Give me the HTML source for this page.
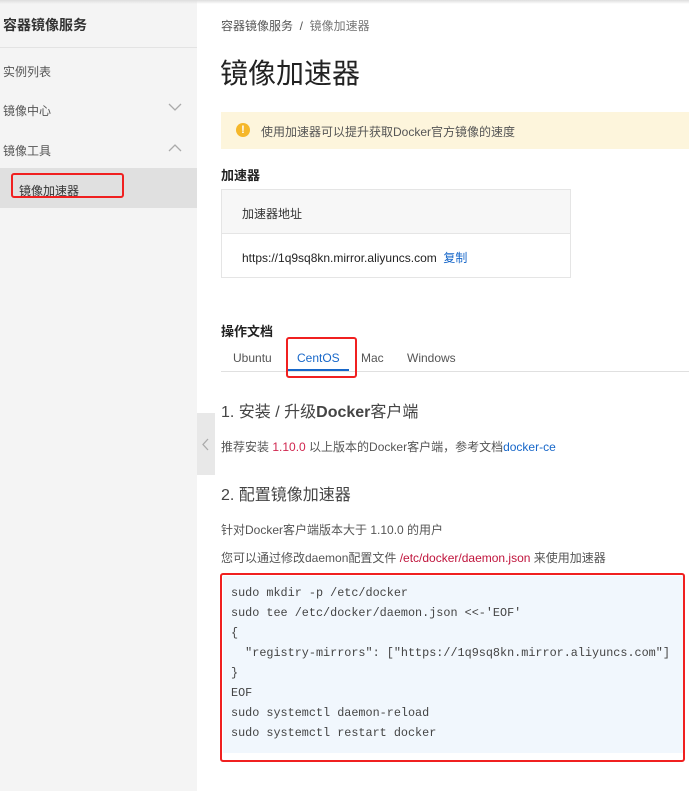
<!DOCTYPE html>
<html><head><meta charset="utf-8"><style>
*{margin:0;padding:0;box-sizing:border-box}
body{width:689px;height:791px;overflow:hidden;background:#fff;font-family:"Liberation Sans","Noto Sans CJK SC",sans-serif;color:#333;position:relative}
.a{position:absolute;white-space:nowrap}
.side{position:absolute;left:0;top:0;width:197px;height:791px;background:#f4f4f4}
.top{position:absolute;left:0;top:0;width:689px;height:4px;background:linear-gradient(#ddd,#fff0)}
.code{position:absolute;left:223px;top:576px;width:460px;height:177px;background:#f1f7fd;font-family:"Liberation Mono",monospace;font-size:11.8px;color:#444;line-height:20px;padding:7px 0 0 8px;white-space:pre}
</style></head><body>
<div class="side"></div>
<div class="top"></div>
<div class="a" style="left:3px;top:15px;font-size:14px;font-weight:bold;color:#333">容器镜像服务</div>
<div class="a" style="left:0;top:47px;width:197px;height:1px;background:#e3e3e3"></div>
<div class="a" style="left:3px;top:63px;font-size:12px;color:#555">实例列表</div>
<div class="a" style="left:3px;top:102px;font-size:12px;color:#555">镜像中心</div>
<svg class="a" style="left:168px;top:103px" width="14" height="9"><path d="M1 1l6 6 6-6" fill="none" stroke="#aaa" stroke-width="1.3"/></svg>
<div class="a" style="left:3px;top:142px;font-size:12px;color:#555">镜像工具</div>
<svg class="a" style="left:168px;top:144px" width="14" height="9"><path d="M1 7l6-6 6 6" fill="none" stroke="#aaa" stroke-width="1.3"/></svg>
<div class="a" style="left:0;top:168px;width:197px;height:40px;background:#e0e0e0"></div>
<div class="a" style="left:19px;top:182px;font-size:12px;color:#333">镜像加速器</div>
<div class="a" style="left:11px;top:173px;width:113px;height:25px;border:2px solid #f02020;border-radius:3px"></div>
<div class="a" style="left:197px;top:413px;width:18px;height:62px;background:#e8e8e8"></div>
<svg class="a" style="left:202px;top:438px" width="8" height="13"><path d="M6 1L1 6.5 6 12" fill="none" stroke="#aaa" stroke-width="1.3"/></svg>

<div class="a" style="left:221px;top:17px;font-size:12px;color:#555">容器镜像服务 &nbsp;/&nbsp; <span style="color:#777">镜像加速器</span></div>
<div class="a" style="left:220px;top:52px;font-size:28px;color:#222">镜像加速器</div>
<div class="a" style="left:221px;top:112px;width:468px;height:37px;background:#fdf5dc"></div>
<div class="a" style="left:236px;top:123px;width:14px;height:14px;border-radius:50%;background:#f5b72a;color:#fff;font-size:11px;font-weight:bold;text-align:center;line-height:14px">!</div>
<div class="a" style="left:261px;top:123px;font-size:12px;color:#555">使用加速器可以提升获取Docker官方镜像的速度</div>
<div class="a" style="left:221px;top:165px;font-size:13px;font-weight:bold;color:#222">加速器</div>
<div class="a" style="left:221px;top:189px;width:350px;height:89px;border:1px solid #e5e5e5"></div>
<div class="a" style="left:222px;top:190px;width:348px;height:44px;background:#f7f7f7;border-bottom:1px solid #e5e5e5"></div>
<div class="a" style="left:242px;top:205px;font-size:12px;color:#333">加速器地址</div>
<div class="a" style="left:242px;top:249px;font-size:12px;color:#222">https://1q9sq8kn.mirror.aliyuncs.com &nbsp;<span style="color:#1767c9">复制</span></div>
<div class="a" style="left:221px;top:321px;font-size:13px;font-weight:bold;color:#222">操作文档</div>
<div class="a" style="left:221px;top:371px;width:468px;height:1px;background:#e0e0e0"></div>
<div class="a" style="left:233px;top:351px;font-size:12px;color:#555">Ubuntu</div>
<div class="a" style="left:297px;top:351px;font-size:12px;color:#1767c9">CentOS</div>
<div class="a" style="left:288px;top:369px;width:61px;height:2px;background:#1767c9"></div>
<div class="a" style="left:361px;top:351px;font-size:12px;color:#555">Mac</div>
<div class="a" style="left:407px;top:351px;font-size:12px;color:#555">Windows</div>
<div class="a" style="left:286px;top:337px;width:71px;height:41px;border:2px solid #f02020;border-radius:3px"></div>
<div class="a" style="left:221px;top:398px;font-size:16px;color:#444">1. 安装 / 升级<b>Docker</b>客户端</div>
<div class="a" style="left:221px;top:438px;font-size:12px;color:#555">推荐安装 <span style="color:#d0264f">1.10.0</span> 以上版本的Docker客户端，参考文档<span style="color:#1767c9">docker-ce</span></div>
<div class="a" style="left:221px;top:481px;font-size:16px;color:#444">2. 配置镜像加速器</div>
<div class="a" style="left:221px;top:521px;font-size:12px;color:#555">针对Docker客户端版本大于 1.10.0 的用户</div>
<div class="a" style="left:221px;top:549px;font-size:12px;color:#555">您可以通过修改daemon配置文件 <span style="color:#c0143c">/etc/docker/daemon.json</span> 来使用加速器</div>
<div class="code">sudo mkdir -p /etc/docker
sudo tee /etc/docker/daemon.json &lt;&lt;-'EOF'
{
  "registry-mirrors": ["https://1q9sq8kn.mirror.aliyuncs.com"]
}
EOF
sudo systemctl daemon-reload
sudo systemctl restart docker</div>
<div class="a" style="left:220px;top:573px;width:465px;height:189px;border:2px solid #f02020;border-radius:3px"></div>
</body></html>
